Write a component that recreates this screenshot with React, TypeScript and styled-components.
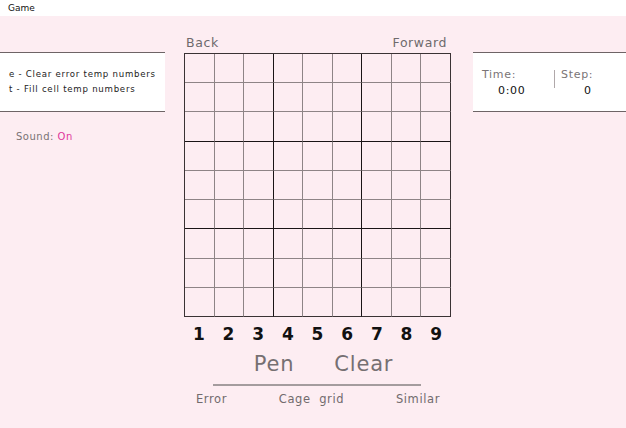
import { createGlobalStyle, styled } from "styled-components";

const GlobalStyle = createGlobalStyle`
  html, body {
    margin: 0;
    padding: 0;
    background: #fdedf2;
    font-family: "DejaVu Sans", "Liberation Sans", sans-serif;
  }
`;

const DIGITS = [1, 2, 3, 4, 5, 6, 7, 8, 9];
const CELLS = Array.from({ length: 81 }, (_, i) => i);

export default function App() {
  return (
    <>
      <GlobalStyle />
      <Page>
        <TopBar>Game</TopBar>
        <Main>
          <SideColumn>
            <HelpPanel>
              <HelpLine>e - Clear error temp numbers</HelpLine>
              <HelpLine>t - Fill cell temp numbers</HelpLine>
            </HelpPanel>
            <Sound>
              Sound: <SoundValue>On</SoundValue>
            </Sound>
          </SideColumn>

          <Board>
            <HistoryRow>
              <span>Back</span>
              <span>Forward</span>
            </HistoryRow>
            <Grid>
              {CELLS.map((i) => {
                const row = Math.floor(i / 9);
                const col = i % 9;
                return (
                  <Cell
                    key={i}
                    $thickRight={col === 2 || col === 5}
                    $thickBottom={row === 2 || row === 5}
                    $last={col === 8}
                    $lastRow={row === 8}
                  />
                );
              })}
            </Grid>
            <Digits>
              {DIGITS.map((d) => (
                <Digit key={d}>{d}</Digit>
              ))}
            </Digits>
            <Tools>
              <span>Pen</span>
              <span>Clear</span>
            </Tools>
            <Divider />
            <Modes>
              <span>Error</span>
              <span>Cage&nbsp; grid</span>
              <span>Similar</span>
            </Modes>
          </Board>

          <StatsPanel>
            <Stat>
              <StatLabel>Time:</StatLabel>
              <StatValue>0:00</StatValue>
            </Stat>
            <StatSep />
            <Stat>
              <StatLabel>Step:</StatLabel>
              <StatValue $indent={23}>0</StatValue>
            </Stat>
          </StatsPanel>
        </Main>
      </Page>
    </>
  );
}

const Page = styled.div`
  width: 626px;
  height: 428px;
  overflow: hidden;
`;

const TopBar = styled.div`
  height: 16px;
  background: #ffffff;
  padding-left: 8px;
  font-size: 9px;
  line-height: 16px;
  color: #111;
`;

const Main = styled.div`
  display: flex;
  align-items: flex-start;
`;

const SideColumn = styled.div`
  flex: 0 0 165px;
  margin-top: 36px;
  margin-right: 19px;
`;

const HelpPanel = styled.div`
  background: #ffffff;
  border-top: 1px solid #6e6466;
  border-bottom: 1px solid #6e6466;
  height: 60px;
  box-sizing: border-box;
  padding: 16px 0 0 9px;
  display: flex;
  flex-direction: column;
  gap: 4px;
  overflow: hidden;
`;

const HelpLine = styled.div`
  font-size: 8.6px;
  line-height: 11px;
  color: #222;
  letter-spacing: 0.75px;
  white-space: nowrap;
`;

const Sound = styled.div`
  margin: 19px 0 0 16px;
  font-size: 10px;
  color: #7a7375;
  letter-spacing: 0.5px;
`;

const SoundValue = styled.span`
  color: #e0359c;
`;

const Board = styled.div`
  flex: 0 0 267px;
  margin-top: 19px;
  display: flex;
  flex-direction: column;
`;

const HistoryRow = styled.div`
  height: 18px;
  padding: 0 4px 0 2px;
  display: flex;
  justify-content: space-between;
  align-items: flex-start;
  font-size: 12.5px;
  color: #6e6a6c;
  letter-spacing: 0.6px;
`;

const Grid = styled.div`
  width: 267px;
  height: 264px;
  display: grid;
  grid-template-columns: repeat(9, 1fr);
  grid-template-rows: repeat(9, 1fr);
  border-top: 1px solid #3a3234;
  border-left: 1px solid #3a3234;
  box-sizing: border-box;
`;

const Cell = styled.div<{
  $thickRight: boolean;
  $thickBottom: boolean;
  $last: boolean;
  $lastRow: boolean;
}>`
  border-right: 1px solid
    ${({ $thickRight, $last }) => ($thickRight ? "#1a1416" : $last ? "#3a3234" : "#8e8486")};
  border-bottom: 1px solid
    ${({ $thickBottom, $lastRow }) =>
      $thickBottom ? "#1a1416" : $lastRow ? "#3a3234" : "#8e8486"};
`;

const Digits = styled.div`
  margin-top: 5px;
  display: grid;
  grid-template-columns: repeat(9, 1fr);
`;

const Digit = styled.div`
  text-align: center;
  font-size: 17px;
  font-weight: bold;
  color: #111;
  line-height: 24px;
`;

const Tools = styled.div`
  margin-top: 6px;
  display: flex;
  justify-content: center;
  gap: 40px;
  padding-left: 12px;
  font-size: 21px;
  color: #767072;
  letter-spacing: 0.8px;
`;

const Divider = styled.div`
  margin: 8px 0 0 29px;
  width: 208px;
  height: 2px;
  background: #a49c9e;
`;

const Modes = styled.div`
  margin-top: 6px;
  padding: 0 11px 0 12px;
  display: flex;
  justify-content: space-between;
  font-size: 11.5px;
  color: #716b6d;
  letter-spacing: 0.6px;
`;

const StatsPanel = styled.div`
  margin: 36px 0 0 22px;
  flex: 1 1 auto;
  min-width: 0;
  height: 60px;
  box-sizing: border-box;
  background: #ffffff;
  border-top: 1px solid #6e6466;
  border-bottom: 1px solid #6e6466;
  padding: 15px 0 0 9px;
  display: flex;
  align-items: flex-start;
`;

const Stat = styled.div`
  display: flex;
  flex-direction: column;
  flex: 0 0 80px;
`;

const StatLabel = styled.div`
  font-size: 11px;
  color: #7a7476;
  letter-spacing: 0.7px;
`;

const StatValue = styled.div<{ $indent?: number }>`
  margin-top: 3px;
  padding-left: ${({ $indent }) => $indent ?? 16}px;
  font-size: 11px;
  color: #111;
  letter-spacing: 0.7px;
`;

const StatSep = styled.div`
  flex: 0 0 1px;
  height: 18px;
  margin: 2px 6px 0 -8px;
  background: #b0a8aa;
`;
